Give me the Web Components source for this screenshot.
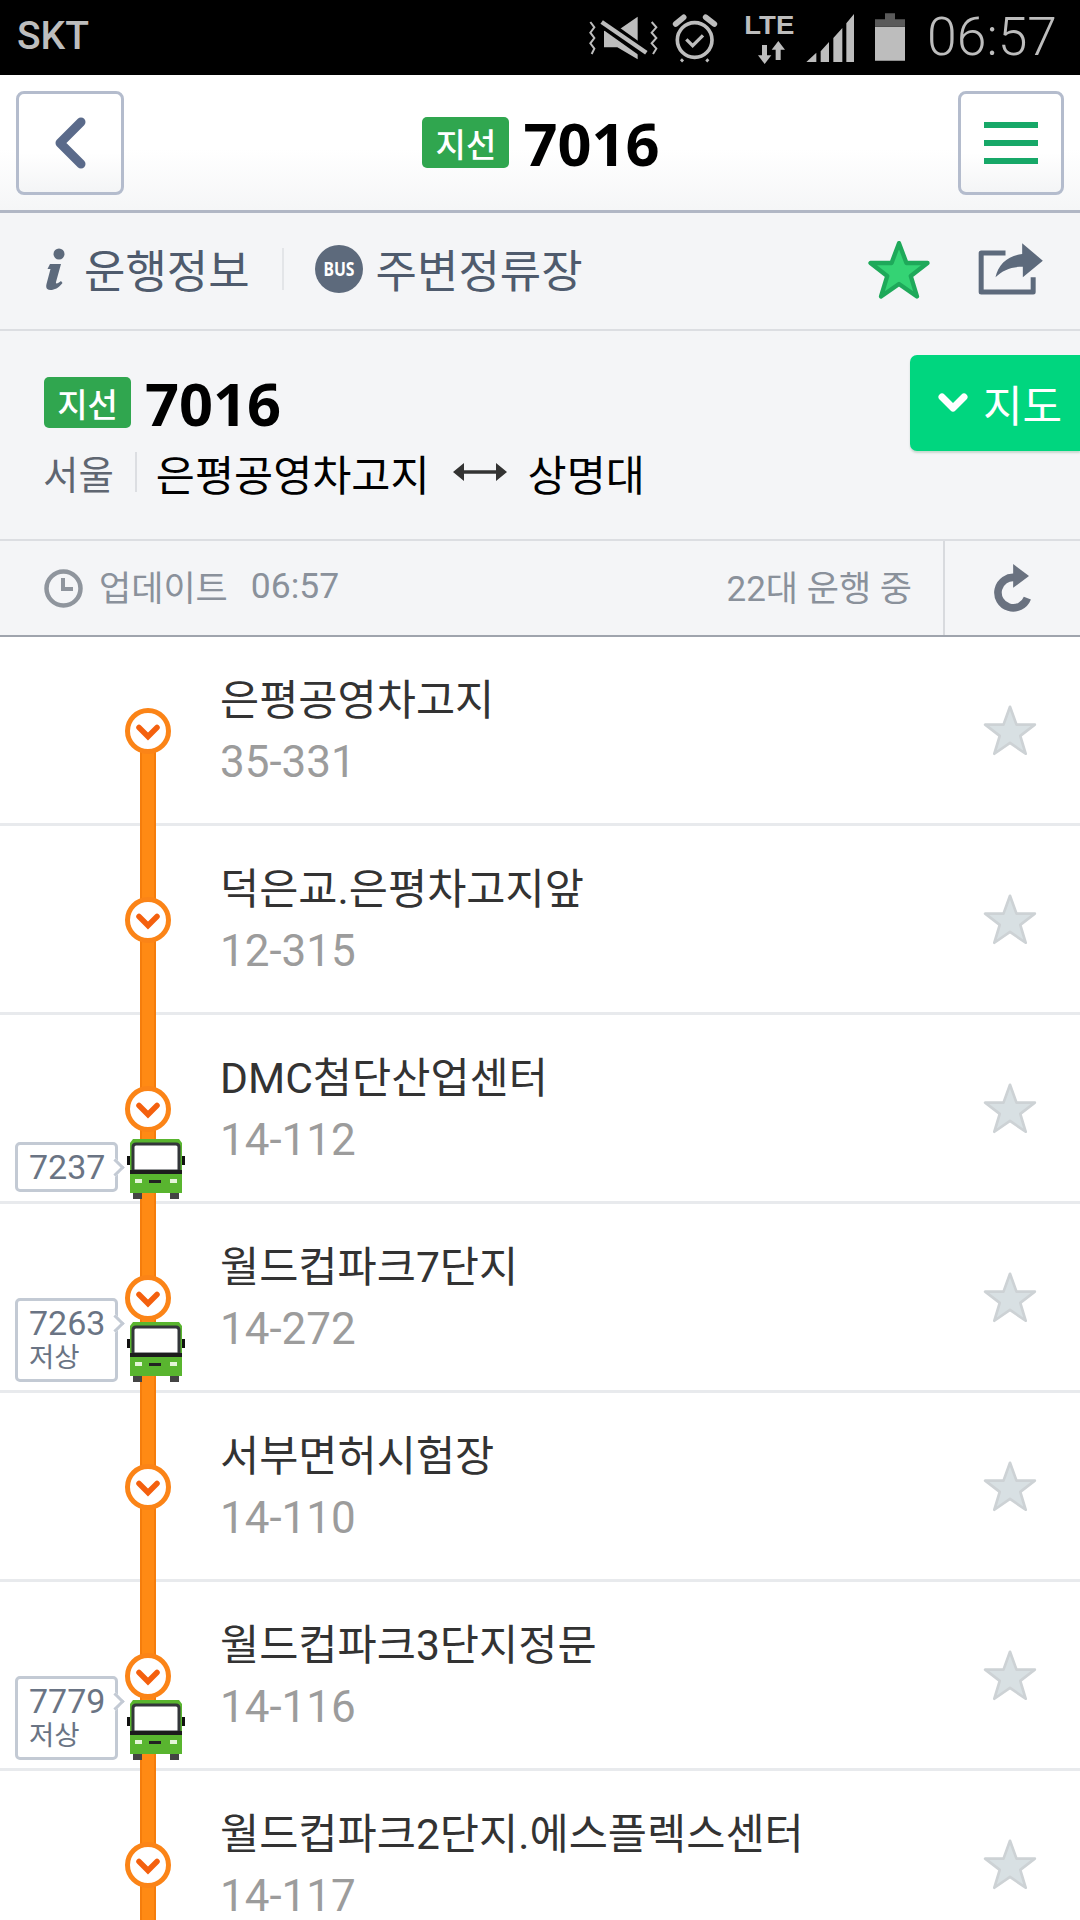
<!DOCTYPE html>
<html lang="ko">
<head>
<meta charset="utf-8">
<title>7016</title>
<style>
  html, body { margin: 0; padding: 0; background: #fff; }
  body { width: 1080px; height: 1920px; overflow: hidden; font-family: Roboto, "Noto Sans CJK KR", sans-serif; }
</style>
</head>
<body>
<status-bar></status-bar>
<app-header></app-header>
<tab-bar></tab-bar>
<route-info></route-info>
<update-bar></update-bar>
<bus-stop number="35-331" first>은평공영차고지</bus-stop>
<bus-stop number="12-315">덕은교.은평차고지앞</bus-stop>
<bus-stop number="14-112">DMC첨단산업센터<bus-marker slot="bus" number="7237"></bus-marker></bus-stop>
<bus-stop number="14-272">월드컵파크7단지<bus-marker slot="bus" number="7263" low></bus-marker></bus-stop>
<bus-stop number="14-110">서부면허시험장</bus-stop>
<bus-stop number="14-116">월드컵파크3단지정문<bus-marker slot="bus" number="7779" low></bus-marker></bus-stop>
<bus-stop number="14-117">월드컵파크2단지.에스플렉스센터</bus-stop>

<script>
(() => {
  const KR = 'Roboto, "Noto Sans CJK KR", sans-serif';
  const TITLE = '"Noto Sans", "Noto Sans CJK KR", sans-serif';

  const define = (name, css, html) => {
    customElements.define(name, class extends HTMLElement {
      constructor() {
        super();
        this.attachShadow({ mode: 'open' });
        this.shadowRoot.innerHTML = `<style>${css}</style>${typeof html === 'function' ? '' : html}`;
        this.html = html;
      }
      connectedCallback() {
        if (typeof this.html === 'function') {
          this.shadowRoot.innerHTML = `<style>${css}</style>${this.html(this)}`;
        }
      }
    });
  };

  // 공통: 지선 배지
  define('line-badge', `
    :host { display: flex; align-items: center; justify-content: center; width: 87px; height: 51px;
      background: #30a64f; border-radius: 5px; color: #fff; font: 500 33px ${KR}; }
  `, `<slot></slot>`);

  define('status-bar', `
    :host { display: flex; align-items: center; height: 75px; background: #000; color: #bdbdbd;
      padding: 0 23px 0 17px; box-sizing: border-box; }
    .carrier { font: 500 39px ${KR}; flex: 1; margin-top: -4px; }
    svg { display: block; width: 319px; height: 75px; }
    .time { font: 300 53.5px ${KR}; margin-left: 21px; line-height: 75px; margin-top: -2px; }
  `, `
    <span class="carrier">SKT</span>
    <svg viewBox="85 0 955 225" fill="#bdbdbd">
      <g fill="none" stroke="#bdbdbd" stroke-width="6">
        <path d="M94 66l12 16-12 16 12 16-12 16 12 16-8 16"/>
        <path d="M278 66l14 16-14 16 14 16-14 16 14 16-10 16"/>
      </g>
      <path d="M135 92h40l61-42v128l-61-36h-40z"/>
      <path d="M118 58L272 168" stroke="#000" stroke-width="34"/>
      <path d="M128 66L262 158" stroke="#bdbdbd" stroke-width="13"/>
      <circle cx="407" cy="120" r="52" fill="none" stroke="#bdbdbd" stroke-width="11"/>
      <path d="M350 72l24-20M440 52l26 20" stroke="#bdbdbd" stroke-width="17" stroke-linecap="round"/>
      <path d="M372 178l-6 6M442 178l6 6" stroke="#bdbdbd" stroke-width="9"/>
      <path d="M382 118l19 19 31-31" fill="none" stroke="#bdbdbd" stroke-width="10"/>
      <text x="556" y="102" font-family="'Liberation Sans', sans-serif" font-weight="700" font-size="80" textLength="150" lengthAdjust="spacingAndGlyphs">LTE</text>
      <path d="M609 135h15v31h13l-20 26-20-26h12z"/>
      <path d="M650 180h15v-31h13l-20-26-20 26h12z"/>
      <path d="M742 186l30-28v28zM785 186v-32l25-28v60zM823 186v-72l27-30v102zM862 186v-116l23-28v144z"/>
      <path d="M948 80h90v102h-90z"/>
      <path d="M948 80v-22h30v-18h30v18h30v22z" fill="#5a5a5a"/>
    </svg>
    <span class="time">06:57</span>
  `);

  define('app-header', `
    :host { display: flex; align-items: center; justify-content: space-between; height: 138px;
      box-sizing: border-box; padding: 0 16px 0 16px; background: linear-gradient(#fff 55%, #f5f6f7);
      border-bottom: 3px solid #b1b7c5; }
    .btn { width: 108px; height: 104px; box-sizing: border-box; border: 3px solid #b4bccd; border-radius: 8px;
      background: linear-gradient(#fff 60%, #f4f5f6); display: flex; align-items: center; justify-content: center; }
    .menu { width: 106px; }
    .title { display: flex; align-items: center; gap: 14px; font: 700 59.5px ${TITLE}; color: #000; }
    .title span { line-height: 58px; }
    svg { display: block; }
  `, `
    <div class="btn">
      <svg width="40" height="56" viewBox="0 0 40 56"><path d="M31 7L10 28l21 21" fill="none" stroke="#5a6a8a" stroke-width="9" stroke-linecap="round" stroke-linejoin="round"/></svg>
    </div>
    <div class="title"><line-badge>지선</line-badge><span>7016</span></div>
    <div class="btn menu">
      <svg width="54" height="42" viewBox="0 0 54 42" fill="#17a868"><rect width="54" height="6"/><rect y="18" width="54" height="6"/><rect y="36" width="54" height="6"/></svg>
    </div>
  `);

  define('tab-bar', `
    :host { display: flex; align-items: center; height: 118px; box-sizing: border-box; background: #f4f5f7;
      border-bottom: 2px solid #dcdee2; padding: 0 36px 5px 46px; color: #4f5b6d; font: 400 45px ${KR}; }
    .tab { display: flex; align-items: center; }
    .i { margin-right: 18px; }
    .sep { width: 2px; height: 42px; background: #e3e5e8; margin: 0 32px 0 32px; }
    .bus { margin-right: 13px; margin-left: -1px; }
    .fill { flex: 1; }
    .star { margin-right: 47px; margin-top: 2px; }
    svg { display: block; }
  `, `
    <div class="tab">
      <svg class="i" width="20" height="42" viewBox="0 0 20 42" fill="#5d6a7c"><circle cx="13" cy="6" r="5.5"/><path d="M4 16h11l-5 18c-.5 2 1.500 2 5-1l1.500 2c-4 5-8 7-12 7-3.500 0-5-2-4-6l4-15-3 0z"/></svg>
      <span>운행정보</span>
    </div>
    <div class="sep"></div>
    <div class="tab">
      <svg class="bus" width="48" height="48" viewBox="0 0 48 48"><circle cx="24" cy="24" r="24" fill="#5d6a7c"/><text x="24" y="31" fill="#fff" text-anchor="middle" font-family="'Noto Sans', sans-serif" font-weight="700" font-size="20" textLength="31" lengthAdjust="spacingAndGlyphs">BUS</text></svg>
      <span>주변정류장</span>
    </div>
    <div class="fill"></div>
    <svg class="star" width="62" height="59" viewBox="0 0 100 95"><path d="M50 5l12 32h34l-27 21 10 33-29-20-29 20 10-33-27-21h34z" fill="#34d374" stroke="#1ea95a" stroke-width="7" stroke-linejoin="round"/></svg>
    <svg width="67" height="55" viewBox="890 105 200 165">
      <path d="M975 141H902v117h156v-44" fill="none" stroke="#5d6a7c" stroke-width="15" stroke-linejoin="round"/>
      <path d="M945 214c8-40 38-66 80-70v-32l62 52-60 50v-32c-34 0-60 10-82 32z" fill="#5d6a7c"/>
    </svg>
  `);

  define('route-info', `
    :host { display: flex; align-items: flex-start; height: 210px; box-sizing: border-box; background: #f4f5f7;
      border-bottom: 2px solid #dcdee2; padding: 46px 0 0 44px; }
    .main { flex: 1; }
    .title { display: flex; align-items: center; gap: 14px; font: 700 59.5px ${TITLE}; color: #000; height: 51px; }
    .route { display: flex; align-items: center; margin-top: 19px; height: 50px; font: 400 42.5px ${KR}; color: #000; }
    .city { color: #5f6671; font-size: 38.5px; margin-left: -1px; }
    .sep { width: 2px; height: 40px; background: #dcdee2; margin: 0 19px 0 21px; }
    svg { display: block; margin: 0 21px 0 23px; }
    .map { width: 170px; height: 96px; margin-top: -22px; box-sizing: border-box; background: #00d67f;
      border-radius: 7px 0 0 7px; box-shadow: 0 2px 2px #c8d8d0; color: #fff; font: 400 43px ${KR};
      display: flex; align-items: center; padding-left: 28px; }
    .map svg { margin: 0 15px 0 0; }
  `, `
    <div class="main">
      <div class="title"><line-badge>지선</line-badge><span>7016</span></div>
      <div class="route">
        <span class="city">서울</span><div class="sep"></div>
        <span>은평공영차고지</span>
        <svg width="54" height="22" viewBox="0 0 54 22"><path d="M3 11h48" stroke="#333" stroke-width="3.500"/><path d="M0 11l11-9v18zM54 11l-11-9v18z" fill="#333"/></svg>
        <span>상명대</span>
      </div>
    </div>
    <div class="map">
      <svg width="30" height="20" viewBox="0 0 30 20"><path d="M4 4l11 11L26 4" fill="none" stroke="#fff" stroke-width="7" stroke-linecap="round" stroke-linejoin="round"/></svg>
      <span>지도</span>
    </div>
  `);

  define('update-bar', `
    :host { display: flex; align-items: center; height: 96px; box-sizing: border-box; background: #f4f5f7;
      border-bottom: 2px solid #9fa4ad; color: #8a919b; font: 400 35px ${KR}; padding-left: 44px; }
    .clock { margin-right: 16px; }
    .label { margin-top: -5px; }
    .time { margin: -5px 0 0 23px; flex: 1; font-size: 35.5px; }
    .count { margin: -5px 31px 0 0; }
    .refresh { align-self: stretch; width: 137px; box-sizing: border-box; border-left: 2px solid #d8dade;
      display: flex; align-items: center; justify-content: center; padding-right: 2px; }
    svg { display: block; }
  `, `
    <svg class="clock" width="39" height="39" viewBox="0 0 39 39"><circle cx="19.500" cy="19.500" r="17" fill="none" stroke="#8f959d" stroke-width="4.500"/><path d="M19 9v11h10" fill="none" stroke="#8f959d" stroke-width="4"/></svg>
    <span class="label">업데이트</span><span class="time">06:57</span>
    <span class="count">22대 운행 중</span>
    <div class="refresh">
      <svg width="43" height="52" viewBox="935 1050 130 155">
        <path d="M1012 1096a46 46 0 1 0 36 62" fill="none" stroke="#6a7280" stroke-width="23"/>
        <path d="M1005 1055l48 36-48 36z" fill="#6a7280"/>
      </svg>
    </div>
  `);

  // 정류장 한 줄: 노선 띠와 원은 줄 위에 겹쳐 그림
  define('bus-stop', `
    :host { display: block; position: relative; height: 189px; box-sizing: border-box; background: #fff;
      border-bottom: 3px solid #e8eaed; padding: 38px 0 0 220px; }
    .name { font: 400 42.6px ${KR}; color: #333; line-height: 50px; height: 50px; white-space: nowrap; }
    .num { font: 400 44px ${KR}; color: #9c9c9c; line-height: 50px; margin-top: 12px; }
    .line { position: absolute; left: 140px; width: 16px; top: 0; bottom: -3px; box-sizing: border-box;
      background: #ff8a14; border-left: 2px solid #f57d0c; border-right: 2px solid #f57d0c; }
    :host([first]) .line { top: 93px; }
    .stop { position: absolute; left: 124px; top: 70px; width: 48px; height: 48px; }
    .star { position: absolute; left: 983px; top: 67px; }
  `, el => `
    <div class="line"></div>
    <svg class="stop" viewBox="0 0 48 48"><circle cx="24" cy="24" r="20.500" fill="#fff" stroke="#fb8417" stroke-width="5"/><path d="M15 20.500l9 9 9-9" fill="none" stroke="#f4600e" stroke-width="5.500" stroke-linecap="round" stroke-linejoin="miter"/></svg>
    <div class="name"><slot></slot></div>
    <div class="num">${el.getAttribute('number')}</div>
    <svg class="star" width="54" height="52" viewBox="0 0 100 96"><path d="M50 5l12 33h34l-27 21 10 33-29-20-29 20 10-33-27-21h34z" fill="#d8e0e3" stroke="#cdd2d5" stroke-width="5" stroke-linejoin="round"/></svg>
    <slot name="bus"></slot>
  `);

  define('bus-marker', `
    :host { position: absolute; left: 15px; top: 127px; display: block; }
    :host([low]) { top: 94px; }
    .tag { position: relative; box-sizing: border-box; width: 103px; height: 50px; background: #fff;
      border: 3px solid #c3cad4; border-radius: 5px; padding-left: 11px; color: #6a7484;
      font: 400 34px/44px ${KR}; }
    :host([low]) .tag { height: 84px; }
    .tag small { display: block; font-size: 27.5px; line-height: 28px; margin-top: -1px; }
    .tag::after { content: ""; position: absolute; right: -7px; top: 16px; width: 10px; height: 10px; background: #fff;
      border-top: 3px solid #c3cad4; border-right: 3px solid #c3cad4; transform: rotate(45deg); }
    svg { position: absolute; left: 112px; top: 24px; display: block; }
  `, el => `
    <div class="tag">${el.getAttribute('number')}${el.hasAttribute('low') ? '<small>저상</small>' : ''}</div>
    <svg width="58" height="60" viewBox="0 0 58 60" style="${el.hasAttribute('low') ? '' : 'top:-3px'}">
      <rect x="0" y="17" width="6" height="9" fill="#111"/><rect x="52" y="17" width="6" height="9" fill="#111"/>
      <rect x="6" y="54" width="9" height="6" fill="#444"/><rect x="43" y="54" width="9" height="6" fill="#444"/>
      <path d="M3 4l3-4h46l3 4v50H3z" fill="#59b52f"/>
      <path d="M6 8q0-3 3-3h40q3 0 3 3v24H6z" fill="#fff" stroke="#33363a" stroke-width="3"/>
      <rect x="3" y="31" width="52" height="4" fill="#1c1c1c"/>
      <rect x="8" y="40" width="7" height="4" fill="#e5f5d8"/><rect x="43" y="40" width="7" height="4" fill="#e5f5d8"/>
      <rect x="22" y="41" width="12" height="3" fill="#222"/>
    </svg>
  `);
})();
</script>
</body>
</html>
